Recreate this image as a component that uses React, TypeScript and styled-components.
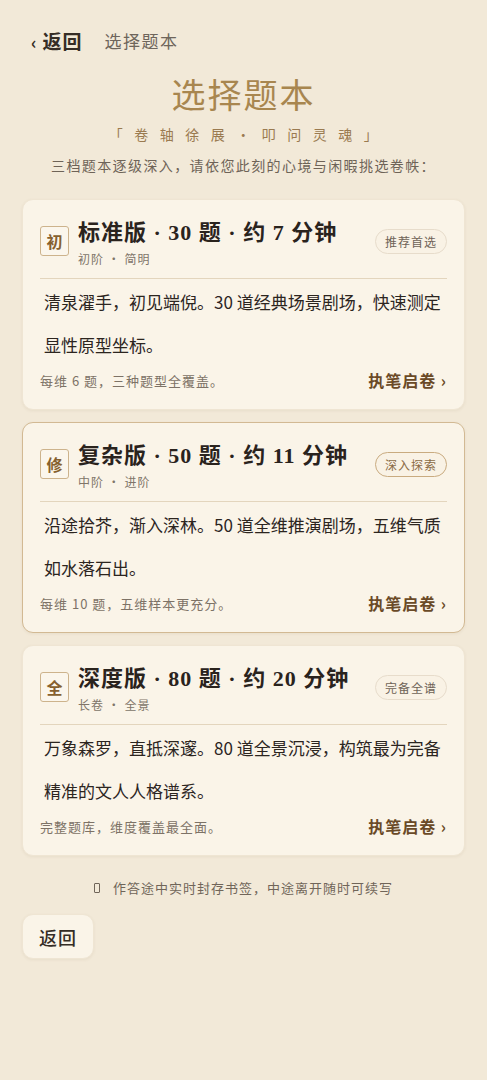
import styled, { createGlobalStyle } from "styled-components";

const GlobalStyle = createGlobalStyle`
  html, body {
    margin: 0;
    padding: 0;
    background: #f2e9d8;
  }
  body {
    font-family: "Noto Sans CJK SC", "Noto Sans", sans-serif;
    color: #2f2820;
  }
`;

const Page = styled.div`
  min-height: 1080px;
  padding: 22px 22px 40px;
  box-sizing: border-box;
`;

const TopBar = styled.div`
  display: flex;
  align-items: center;
  gap: 22px;
  padding-left: 9px;
  height: 36px;
`;

const BackLink = styled.span`
  display: flex;
  align-items: center;
  gap: 5px;
  font-size: 19px;
  font-weight: 700;
  letter-spacing: 1px;
  color: #352d25;
`;

const Chevron = styled.span`
  font-size: 17px;
  font-weight: 700;
  margin-top: 2px;
`;

const TopTitle = styled.span`
  font-size: 17px;
  letter-spacing: 1.5px;
  color: #6e655b;
`;

const Heading = styled.div`
  display: flex;
  flex-direction: column;
  align-items: center;
  margin-top: 13px;
`;

const BigTitle = styled.h1`
  margin: 0;
  font-size: 34px;
  line-height: 46px;
  font-weight: 400;
  color: #a8864f;
  letter-spacing: 2px;
`;

const Motto = styled.div`
  margin-top: 7px;
  font-size: 14px;
  line-height: 20px;
  color: #9a7a50;
  letter-spacing: 11.5px;
  padding-left: 11px;
`;

const Intro = styled.div`
  margin-top: 11px;
  font-size: 14px;
  line-height: 20px;
  letter-spacing: 1.4px;
  color: #6e6357;
`;

const CardList = styled.div`
  display: flex;
  flex-direction: column;
  gap: 12px;
  margin-top: 24px;
`;

const Card = styled.div<{ $active?: boolean }>`
  background: #faf4e8;
  border-radius: 11px;
  border: 1px solid ${(p) => (p.$active ? "#d2b993" : "#efe5d3")};
  box-shadow: 0 1px 3px rgba(120, 95, 55, 0.08);
  padding: 18px 17px 17px;
`;

const CardHead = styled.div`
  display: flex;
  align-items: flex-start;
  gap: 9px;
`;

const Seal = styled.div`
  width: 29px;
  height: 30px;
  margin-top: 8px;
  flex-shrink: 0;
  display: flex;
  align-items: center;
  justify-content: center;
  border: 1px solid #cdb38c;
  border-radius: 3px;
  background: #fbf6ec;
  font-size: 16px;
  font-weight: 700;
  color: #86602f;
  box-sizing: border-box;
`;

const HeadText = styled.div`
  flex: 1;
  display: flex;
  flex-direction: column;
`;

const CardTitle = styled.div`
  font-family: "Liberation Serif", "Noto Sans CJK SC", serif;
  font-size: 22px;
  line-height: 30px;
  letter-spacing: 1px;
  font-weight: 700;
  color: #2a231d;
`;

const Level = styled.div`
  margin-top: 2px;
  font-size: 12px;
  line-height: 18px;
  letter-spacing: 1px;
  color: #807568;
`;

const Pill = styled.div<{ $active?: boolean }>`
  margin-top: 11px;
  padding: 0 9px;
  height: 25px;
  line-height: 24px;
  box-sizing: border-box;
  border-radius: 13px;
  font-size: 12px;
  letter-spacing: 1px;
  border: 1px solid ${(p) => (p.$active ? "#c9ab80" : "#e7dccb")};
  color: ${(p) => (p.$active ? "#8a6a44" : "#6e6357")};
  background: #f9f2e5;
`;

const Rule = styled.div`
  height: 1px;
  background: #e3d5bd;
  margin-top: 10px;
`;

const Body = styled.p`
  margin: 1px 0 0;
  padding-left: 4px;
  font-size: 17px;
  line-height: 43px;
  color: #2c251f;
`;

const CardFoot = styled.div`
  display: flex;
  justify-content: space-between;
  align-items: center;
  margin-top: 2px;
`;

const Note = styled.span`
  font-size: 13px;
  letter-spacing: 1px;
  color: #7d7266;
`;

const Start = styled.span`
  font-size: 16px;
  font-weight: 700;
  letter-spacing: 1px;
  color: #6a4a27;
`;

const Footnote = styled.div`
  display: flex;
  justify-content: center;
  align-items: center;
  gap: 13px;
  margin-top: 22px;
  font-size: 13px;
  letter-spacing: 1px;
  color: #706559;
`;

const Tofu = styled.span`
  width: 4px;
  height: 8px;
  border: 1px solid #706559;
  border-radius: 1px;
`;

const BackButton = styled.button`
  margin-top: 17px;
  height: 45px;
  padding: 0 16px;
  border: 1px solid #efe5d3;
  border-radius: 11px;
  background: #faf4e8;
  box-shadow: 0 1px 3px rgba(120, 95, 55, 0.08);
  font-family: "Noto Sans CJK SC", sans-serif;
  font-size: 18px;
  font-weight: 500;
  letter-spacing: 1px;
  color: #352d25;
`;

const tiers = [
  {
    seal: "初",
    title: "标准版 · 30 题 · 约 7 分钟",
    level: "初阶 · 简明",
    pill: "推荐首选",
    body: "清泉濯手，初见端倪。30 道经典场景剧场，快速测定显性原型坐标。",
    note: "每维 6 题，三种题型全覆盖。",
  },
  {
    seal: "修",
    title: "复杂版 · 50 题 · 约 11 分钟",
    level: "中阶 · 进阶",
    pill: "深入探索",
    body: "沿途拾芥，渐入深林。50 道全维推演剧场，五维气质如水落石出。",
    note: "每维 10 题，五维样本更充分。",
    active: true,
  },
  {
    seal: "全",
    title: "深度版 · 80 题 · 约 20 分钟",
    level: "长卷 · 全景",
    pill: "完备全谱",
    body: "万象森罗，直抵深邃。80 道全景沉浸，构筑最为完备精准的文人人格谱系。",
    note: "完整题库，维度覆盖最全面。",
  },
];

export default function App() {
  return (
    <Page>
      <GlobalStyle />
      <TopBar>
        <BackLink>
          <Chevron>‹</Chevron>返回
        </BackLink>
        <TopTitle>选择题本</TopTitle>
      </TopBar>
      <Heading>
        <BigTitle>选择题本</BigTitle>
        <Motto>「卷轴徐展·叩问灵魂」</Motto>
        <Intro>三档题本逐级深入，请依您此刻的心境与闲暇挑选卷帙：</Intro>
      </Heading>
      <CardList>
        {tiers.map((t) => (
          <Card key={t.seal} $active={t.active}>
            <CardHead>
              <Seal>{t.seal}</Seal>
              <HeadText>
                <CardTitle>{t.title}</CardTitle>
                <Level>{t.level}</Level>
              </HeadText>
              <Pill $active={t.active}>{t.pill}</Pill>
            </CardHead>
            <Rule />
            <Body>{t.body}</Body>
            <CardFoot>
              <Note>{t.note}</Note>
              <Start>执笔启卷 ›</Start>
            </CardFoot>
          </Card>
        ))}
      </CardList>
      <Footnote>
        <Tofu />
        作答途中实时封存书签，中途离开随时可续写
      </Footnote>
      <BackButton>返回</BackButton>
    </Page>
  );
}
